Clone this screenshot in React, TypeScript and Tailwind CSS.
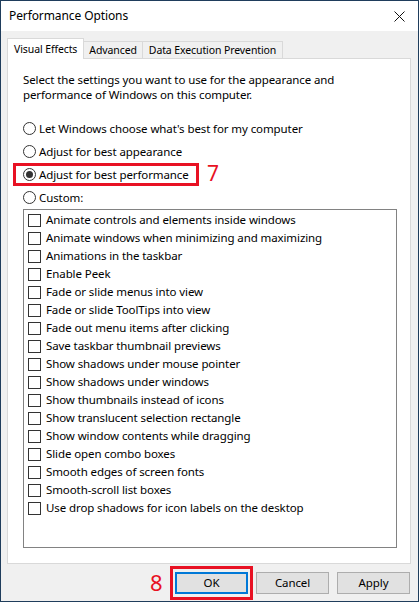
import React from 'react';

const effects = [
  'Animate controls and elements inside windows',
  'Animate windows when minimizing and maximizing',
  'Animations in the taskbar',
  'Enable Peek',
  'Fade or slide menus into view',
  'Fade or slide ToolTips into view',
  'Fade out menu items after clicking',
  'Save taskbar thumbnail previews',
  'Show shadows under mouse pointer',
  'Show shadows under windows',
  'Show thumbnails instead of icons',
  'Show translucent selection rectangle',
  'Show window contents while dragging',
  'Slide open combo boxes',
  'Smooth edges of screen fonts',
  'Smooth-scroll list boxes',
  'Use drop shadows for icon labels on the desktop',
];

const radios = [
  "Let Windows choose what's best for my computer",
  'Adjust for best appearance',
  'Adjust for best performance',
  'Custom:',
];

function Radio({ checked }: { checked: boolean }) {
  return (
    <span className="flex h-[13px] w-[13px] shrink-0 items-center justify-center rounded-full border border-[#333333] bg-white">
      {checked && <span className="h-[7px] w-[7px] rounded-full bg-[#333333]" />}
    </span>
  );
}

export default function App() {
  return (
    <div
      className="flex h-[602px] w-[419px] flex-col border border-[#1f3d5c] bg-[#f0f0f0] text-[11.5px] tracking-[-0.1px] text-black"
      style={{ fontFamily: '"Noto Sans", "Liberation Sans", sans-serif' }}
    >
      {/* title bar */}
      <div className="flex h-[30px] shrink-0 items-center justify-between bg-white pl-[8px] pr-[9px]">
        <span className="text-[12px] leading-none">Performance Options</span>
        <svg width="11" height="11" viewBox="0 0 11 11" className="mr-[4px]">
          <path d="M0.5 0.5 L10.5 10.5 M10.5 0.5 L0.5 10.5" stroke="#111" strokeWidth="1" />
        </svg>
      </div>

      <div className="flex flex-1 flex-col px-[6px] pt-[7px]">
        {/* tabs */}
        <div className="relative z-10 -mb-px flex h-[21px] items-end text-[10.5px]">
          <div className="flex h-[21px] items-start border-x border-t border-[#d9d9d9] bg-white px-[6px] pt-[3px] leading-[14px]">
            Visual Effects
          </div>
          <div className="flex h-[18px] items-center border border-l-0 border-[#d9d9d9] bg-[#f0f0f0] px-[5px] leading-none">
            Advanced
          </div>
          <div className="flex h-[18px] items-center border border-l-0 border-[#d9d9d9] bg-[#f0f0f0] px-[6px] leading-none">
            Data Execution Prevention
          </div>
        </div>

        {/* tab panel */}
        <div className="mr-[1px] flex h-[506px] flex-col border border-[#d9d9d9] bg-white pl-[15px] pt-[13px]">
          <p className="leading-[15px]">
            Select the settings you want to use for the appearance and
            <br />
            performance of Windows on this computer.
          </p>

          <div className="mt-[15px] flex flex-col">
            {radios.map((label, i) => (
              <div key={label} className="relative flex h-[23px] items-center gap-[3px]">
                <Radio checked={i === 2} />
                <span>{label}</span>
                {i === 2 && (
                  <>
                    <span className="absolute left-[-10px] top-0 h-[23px] w-[186px] border-[3px] border-[#e81123]" />
                    <span className="absolute left-[184px] top-[-4px] text-[21px] leading-[28px] text-[#e81123]">7</span>
                  </>
                )}
              </div>
            ))}
          </div>

          {/* list box */}
          <div className="flex h-[339px] w-[374px] flex-col border border-[#828282] bg-white pl-[4px] pt-[1px]">
            {effects.map((label) => (
              <div key={label} className="flex h-[18px] items-center gap-[5px]">
                <span className="h-[13px] w-[13px] shrink-0 border border-[#333333] bg-white" />
                <span className="whitespace-nowrap">{label}</span>
              </div>
            ))}
          </div>
        </div>

        {/* buttons */}
        <div className="mt-[8px] flex justify-end gap-[8px] pr-[2px]">
          <div className="relative">
            <span className="absolute left-[-25px] top-[-5px] text-[22px] leading-[30px] text-[#e81123]">8</span>
            <span className="absolute left-[-5px] top-[-6px] h-[34px] w-[83px] border-[3px] border-[#e81123]" />
            <button className="flex h-[22px] w-[73px] items-center justify-center border-2 border-[#0078d7] bg-[#e1e1e1] leading-none">
              OK
            </button>
          </div>
          <button className="flex h-[22px] w-[73px] items-center justify-center border border-[#adadad] bg-[#e1e1e1] leading-none">
            Cancel
          </button>
          <button className="flex h-[22px] w-[73px] items-center justify-center border border-[#adadad] bg-[#e1e1e1] leading-none">
            Apply
          </button>
        </div>
      </div>
    </div>
  );
}
